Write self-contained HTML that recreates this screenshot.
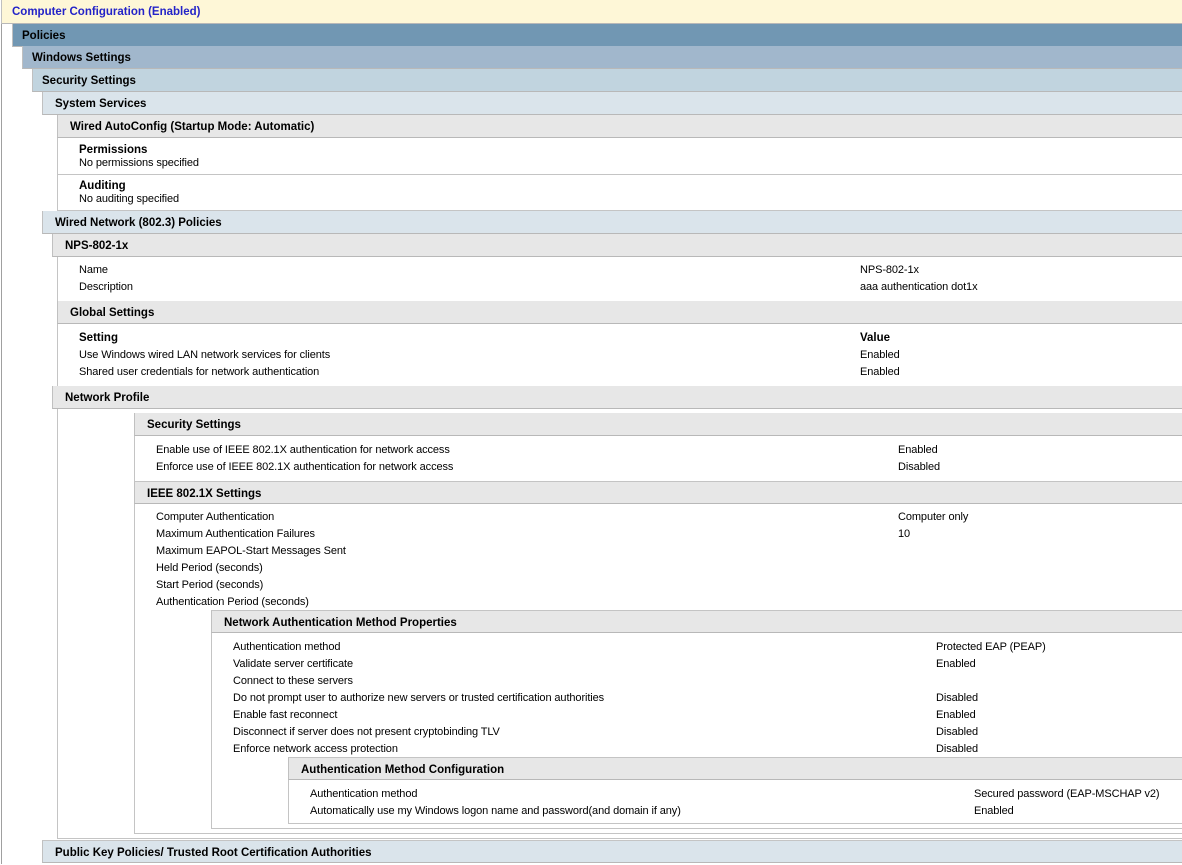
<!DOCTYPE html>
<html><head><meta charset="utf-8"><style>
body{margin:0;width:1182px;height:864px;overflow:hidden;background:#fff;font-family:"Liberation Sans",Arial,sans-serif;font-size:11px;color:#000;position:relative}
div{position:absolute;box-sizing:border-box}
.bar{right:0;height:23px;font-weight:bold;font-size:11.5px;line-height:24px;border-bottom:1px solid #b8b8b8;border-left:1px solid #c0c0c0;white-space:nowrap}
.g{background:#e7e7e7}
.s{background:#dae4eb}
.box{right:-2px;border-left:1px solid #c4c4c4;border-bottom:1px solid #c4c4c4}
.t{white-space:nowrap;line-height:13px;margin-top:1px;letter-spacing:-0.1px}
.b{font-weight:bold;font-size:11.5px;letter-spacing:0}
</style></head><body>
<div style="left:1px;top:0;width:1px;height:864px;background:#a0a0a0"></div>
<div class="bar" style="left:1px;top:0;height:24px;background:#fef7d7;color:#2323c8;padding-left:10px;line-height:24px">Computer Configuration (Enabled)</div>
<div class="bar" style="left:12px;top:24px;background:#7197b3;padding-left:9px">Policies</div>
<div class="bar" style="left:22px;top:46px;background:#a1b7cc;padding-left:9px">Windows Settings</div>
<div class="bar" style="left:32px;top:69px;background:#c1d4df;padding-left:9px">Security Settings</div>
<div class="bar s" style="left:42px;top:92px;padding-left:12px">System Services</div>
<div class="box" style="left:57px;top:115px;height:96px"></div>
<div class="bar g" style="left:57px;top:115px;padding-left:12px">Wired AutoConfig (Startup Mode: Automatic)</div>
<div class="t b" style="left:79px;top:143px">Permissions</div>
<div class="t" style="left:79px;top:156px">No permissions specified</div>
<div style="left:57px;right:0;top:174px;height:1px;background:#c4c4c4"></div>
<div class="t b" style="left:79px;top:179px">Auditing</div>
<div class="t" style="left:79px;top:192px">No auditing specified</div>
<div class="bar s" style="left:42px;top:211px;padding-left:12px">Wired Network (802.3) Policies</div>
<div class="bar g" style="left:52px;top:234px;padding-left:12px">NPS-802-1x</div>
<div class="box" style="left:57px;top:257px;height:45px"></div>
<div class="t" style="left:79px;top:263px">Name</div><div class="t" style="left:860px;top:263px">NPS-802-1x</div>
<div class="t" style="left:79px;top:280px">Description</div><div class="t" style="left:860px;top:280px">aaa authentication dot1x</div>
<div class="box" style="left:57px;top:301px;height:86px"></div>
<div class="bar g" style="left:57px;top:301px;padding-left:12px">Global Settings</div>
<div class="t b" style="left:79px;top:331px">Setting</div><div class="t b" style="left:860px;top:331px">Value</div>
<div class="t" style="left:79px;top:348px">Use Windows wired LAN network services for clients</div><div class="t" style="left:860px;top:348px">Enabled</div>
<div class="t" style="left:79px;top:365px">Shared user credentials for network authentication</div><div class="t" style="left:860px;top:365px">Enabled</div>
<div class="bar g" style="left:52px;top:386px;padding-left:12px">Network Profile</div>
<div class="box" style="left:57px;top:409px;height:430px"></div>
<div class="box" style="left:134px;top:413px;height:421px"></div>
<div class="bar g" style="left:134px;top:413px;padding-left:12px">Security Settings</div>
<div class="t" style="left:156px;top:443px">Enable use of IEEE 802.1X authentication for network access</div><div class="t" style="left:898px;top:443px">Enabled</div>
<div class="t" style="left:156px;top:460px">Enforce use of IEEE 802.1X authentication for network access</div><div class="t" style="left:898px;top:460px">Disabled</div>
<div class="bar g" style="left:134px;top:481px;padding-left:12px;border-top:1px solid #c4c4c4">IEEE 802.1X Settings</div>
<div class="t" style="left:156px;top:510px">Computer Authentication</div><div class="t" style="left:898px;top:510px">Computer only</div>
<div class="t" style="left:156px;top:527px">Maximum Authentication Failures</div><div class="t" style="left:898px;top:527px">10</div>
<div class="t" style="left:156px;top:544px">Maximum EAPOL-Start Messages Sent</div>
<div class="t" style="left:156px;top:561px">Held Period (seconds)</div>
<div class="t" style="left:156px;top:578px">Start Period (seconds)</div>
<div class="t" style="left:156px;top:595px">Authentication Period (seconds)</div>
<div class="box" style="left:211px;top:610px;height:219px"></div>
<div class="bar g" style="left:211px;top:610px;padding-left:12px;border-top:1px solid #c4c4c4">Network Authentication Method Properties</div>
<div class="t" style="left:233px;top:640px">Authentication method</div><div class="t" style="left:936px;top:640px">Protected EAP (PEAP)</div>
<div class="t" style="left:233px;top:657px">Validate server certificate</div><div class="t" style="left:936px;top:657px">Enabled</div>
<div class="t" style="left:233px;top:674px">Connect to these servers</div>
<div class="t" style="left:233px;top:691px">Do not prompt user to authorize new servers or trusted certification authorities</div><div class="t" style="left:936px;top:691px">Disabled</div>
<div class="t" style="left:233px;top:708px">Enable fast reconnect</div><div class="t" style="left:936px;top:708px">Enabled</div>
<div class="t" style="left:233px;top:725px">Disconnect if server does not present cryptobinding TLV</div><div class="t" style="left:936px;top:725px">Disabled</div>
<div class="t" style="left:233px;top:742px">Enforce network access protection</div><div class="t" style="left:936px;top:742px">Disabled</div>
<div class="box" style="left:288px;top:757px;height:67px"></div>
<div class="bar g" style="left:288px;top:757px;padding-left:12px;border-top:1px solid #c4c4c4">Authentication Method Configuration</div>
<div class="t" style="left:310px;top:787px">Authentication method</div><div class="t" style="left:974px;top:787px">Secured password (EAP-MSCHAP v2)</div>
<div class="t" style="left:310px;top:804px">Automatically use my Windows logon name and password(and domain if any)</div><div class="t" style="left:974px;top:804px">Enabled</div>
<div class="bar s" style="left:42px;top:840px;padding-left:12px;border-top:1px solid #c4c4c4">Public Key Policies/ Trusted Root Certification Authorities</div>
</body></html>
